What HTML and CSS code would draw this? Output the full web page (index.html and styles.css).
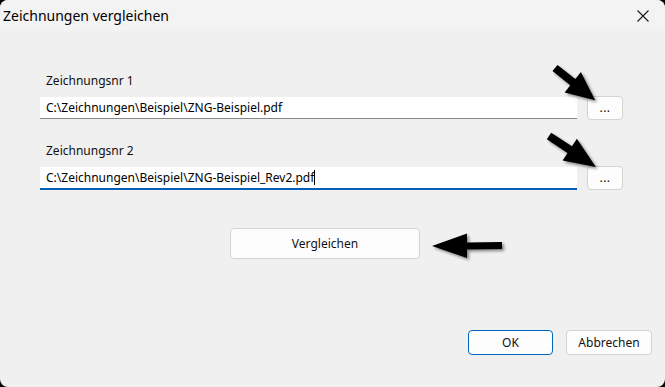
FILE: index.html
```html
<!DOCTYPE html>
<html lang="de">
<head>
  <meta charset="UTF-8">
  <title>Zeichnungen vergleichen</title>
  <link rel="stylesheet" href="styles.css">
</head>
<body>
  <div class="dialog">
    <div class="titlebar">
      <span class="title">Zeichnungen vergleichen</span>
      <span class="close">
        <svg width="12" height="12" viewBox="0 0 12 12">
          <path d="M0.5 0.5 L11.5 11.5 M11.5 0.5 L0.5 11.5" stroke="#1a1a1a" stroke-width="1.1" fill="none"/>
        </svg>
      </span>
    </div>

    <div class="content">
      <div class="field first">
        <div class="label">Zeichnungsnr 1</div>
        <div class="row">
          <div class="textbox">C:\Zeichnungen\Beispiel\ZNG-Beispiel.pdf</div>
          <button class="browse">...</button>
        </div>
      </div>

      <div class="field">
        <div class="label">Zeichnungsnr 2</div>
        <div class="row">
          <div class="textbox focused">C:\Zeichnungen\Beispiel\ZNG-Beispiel_Rev2.pdf<span class="caret"></span></div>
          <button class="browse">...</button>
        </div>
      </div>

      <div class="compare-row">
        <button class="btn compare">Vergleichen</button>
      </div>

      <div class="footer">
        <button class="btn default">OK</button>
        <button class="btn">Abbrechen</button>
      </div>
    </div>

    <!-- Annotation arrows drawn over the dialog -->
    <svg class="arrows" width="665" height="387" viewBox="0 0 665 387">
      <defs>
        <filter id="shadow" x="-30%" y="-30%" width="160%" height="160%">
          <feDropShadow dx="2" dy="2" stdDeviation="1.6" flood-color="#000" flood-opacity="0.45"/>
        </filter>
        <path id="arrow" d="M0 -4 L23 -4 L23 -13 L52 0 L23 13 L23 4 L0 4 Z"/>
      </defs>
      <g filter="url(#shadow)" fill="#000">
        <use href="#arrow" transform="translate(555 68) rotate(38.7) scale(0.99 1)"/>
        <use href="#arrow" transform="translate(549 136) rotate(33.4) scale(1.08 1)"/>
        <path d="M432 246 L467 233.5 L467 242.5 L502 242 L502 249 L467 249.5 L467 258 Z"/>
      </g>
    </svg>
  </div>
</body>
</html>
```

FILE: styles.css
```css
html {
  background: #000;
}

body {
  margin: 0;
  font-family: "Noto Sans", "Open Sans", sans-serif;
  font-size: 12px;
  color: #111;
}

.dialog {
  position: relative;
  width: 665px;
  height: 387px;
  background: #f0f0f0;
  border-radius: 8px;
  overflow: hidden;
  display: flex;
  flex-direction: column;
}

.titlebar {
  height: 31px;
  background: #f3f3f3;
  display: flex;
  align-items: center;
  justify-content: space-between;
  padding: 0 16px 0 3px;
}

.title {
  font-size: 14px;
  color: #000;
}

.close {
  display: flex;
  width: 12px;
  height: 12px;
}

.content {
  flex: 1;
  display: flex;
  flex-direction: column;
  padding: 0 42px 0 40px;
}

.field {
  margin-top: 23px;
}

.field.first {
  margin-top: 42px;
}

.label {
  padding-left: 6px;
  line-height: 16px;
  height: 16px;
  margin-bottom: 8px;
}

.row {
  display: flex;
  align-items: flex-start;
  gap: 10px;
}

.textbox {
  width: 537px;
  height: 22px;
  box-sizing: border-box;
  background: #fff;
  border-bottom: 1px solid #868686;
  padding-left: 6px;
  line-height: 22px;
  color: #000;
  white-space: nowrap;
}

.textbox.focused {
  height: 23px;
  border-bottom: 2px solid #005fb8;
  line-height: 22px;
}

.caret {
  display: inline-block;
  width: 1px;
  height: 15px;
  background: #000;
  vertical-align: -3px;
}

button {
  font-family: inherit;
  font-size: 12px;
  color: #111;
  cursor: pointer;
}

.browse {
  width: 36px;
  height: 24px;
  margin-top: -1px;
  background: #fdfdfd;
  border: 1px solid #d3d3d3;
  border-radius: 4px;
  padding: 0;
  line-height: 20px;
  letter-spacing: 0.5px;
}

.compare-row {
  margin-top: 38px;
  padding-left: 190px;
}

.btn {
  height: 25px;
  width: 86px;
  background: #fdfdfd;
  border: 1px solid #d3d3d3;
  border-radius: 4px;
  padding: 0;
}

.btn.compare {
  width: 190px;
  height: 31px;
}

.btn.default {
  width: 85px;
  border-color: #0067c0;
}

.footer {
  margin-top: auto;
  margin-bottom: 32px;
  margin-right: -29px;
  display: flex;
  justify-content: flex-end;
  gap: 13px;
}

.arrows {
  position: absolute;
  left: 0;
  top: 0;
  pointer-events: none;
}
```
